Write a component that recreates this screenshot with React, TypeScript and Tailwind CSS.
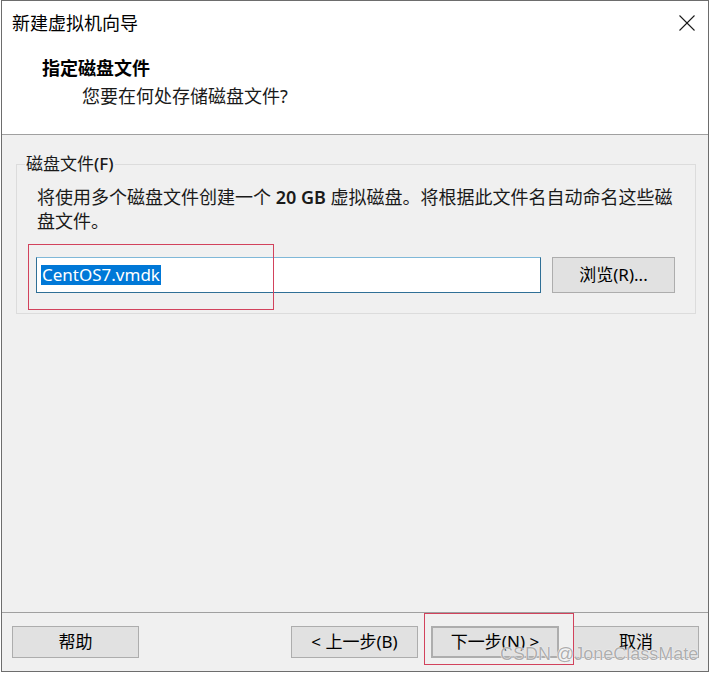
import React from 'react';

const font = "font-['Noto_Sans','Noto_Sans_CJK_SC',sans-serif]";

function CloseIcon() {
  return (
    <svg width="16" height="16" viewBox="0 0 16 16" fill="none" stroke="#1a1a1a" strokeWidth="1.1">
      <line x1="0.5" y1="0.5" x2="15.5" y2="15.5" />
      <line x1="15.5" y1="0.5" x2="0.5" y2="15.5" />
    </svg>
  );
}

function WinButton({ children, className = '' }: { children: React.ReactNode; className?: string }) {
  return (
    <button
      className={`h-[32px] bg-[#e1e1e1] border border-[#adadad] text-[17px] text-black flex items-center justify-center ${className}`}
    >
      {children}
    </button>
  );
}

export default function App() {
  return (
    <div className={`relative w-[712px] h-[673px] bg-white ${font}`}>
      <div className="ml-[1px] w-[708px] h-[672px] border border-[#6d6d6d] flex flex-col bg-[#f0f0f0]">
        {/* header */}
        <div className="h-[134px] bg-white border-b border-[#a0a0a0]">
          <div className="h-[43px] flex items-center justify-between pl-[10px] pr-[13px]">
            <span className="text-[18px] leading-6 text-black">新建虚拟机向导</span>
            <CloseIcon />
          </div>
          <div className="mt-[12px] pl-[40px] text-[18px] leading-6 font-bold text-black">指定磁盘文件</div>
          <div className="mt-[4px] pl-[80px] text-[18px] leading-6 text-[#1a1a1a]">您要在何处存储磁盘文件?</div>
        </div>

        {/* body */}
        <div className="flex-1">
          <div className="relative mt-[29px] ml-[14px] w-[680px] border border-[#dcdcdc] pl-[19px] pt-[20px] pb-[20px]">
            <span className="absolute left-[8px] top-[-13px] bg-[#f0f0f0] px-[1px] text-[17px] leading-6 text-[#1a1a1a]">
              磁盘文件<span className="font-medium">(F)</span>
            </span>
            <p className="ml-[1px] text-[18px] leading-6 text-[#1a1a1a] whitespace-nowrap">
              将使用多个磁盘文件创建一个 <span className="font-semibold">20 GB</span> 虚拟磁盘。将根据此文件名自动命名这些磁
              <br />
              盘文件。
            </p>
            <div className="mt-[24px] flex">
              <div className="w-[505px] h-[36px] bg-white border border-[#2f6f96] border-t-[#7fb8d8] flex items-center pl-[4px]">
                <span className="bg-[#0078d7] text-white text-[17px] leading-[20px] px-[1px]">CentOS7.vmdk</span>
              </div>
              <WinButton className="ml-[11px] w-[123px] h-[36px]">浏览(R)...</WinButton>
            </div>
          </div>
        </div>

        {/* footer */}
        <div className="h-[59px] border-t border-[#a0a0a0] pt-[13px] flex items-start pl-[10px] pr-[9px]">
          <WinButton className="w-[127px]">帮助</WinButton>
          <div className="ml-auto flex">
            <WinButton className="w-[127px]">&lt; 上一步(B)</WinButton>
            <WinButton className="ml-[13px] w-[128px] border-2 border-[#0078d7]">下一步(N) &gt;</WinButton>
            <WinButton className="ml-[14px] w-[126px]">取消</WinButton>
          </div>
        </div>
      </div>

      {/* annotation boxes */}
      <div className="absolute left-[28px] top-[244px] w-[246px] h-[66px] border border-[#d2425c]" />
      <div className="absolute left-[424px] top-[613px] w-[150px] h-[52px] border border-[#d2425c]" />

      {/* watermark */}
      <div className="absolute left-[500px] top-[644px] text-[18px] leading-5 text-[#a0a0a0]/85 [text-shadow:0_0_1px_#ffffff,0_0_1px_#ffffff] font-['Liberation_Sans',sans-serif]">
        CSDN @JoneClassMate
      </div>
    </div>
  );
}
